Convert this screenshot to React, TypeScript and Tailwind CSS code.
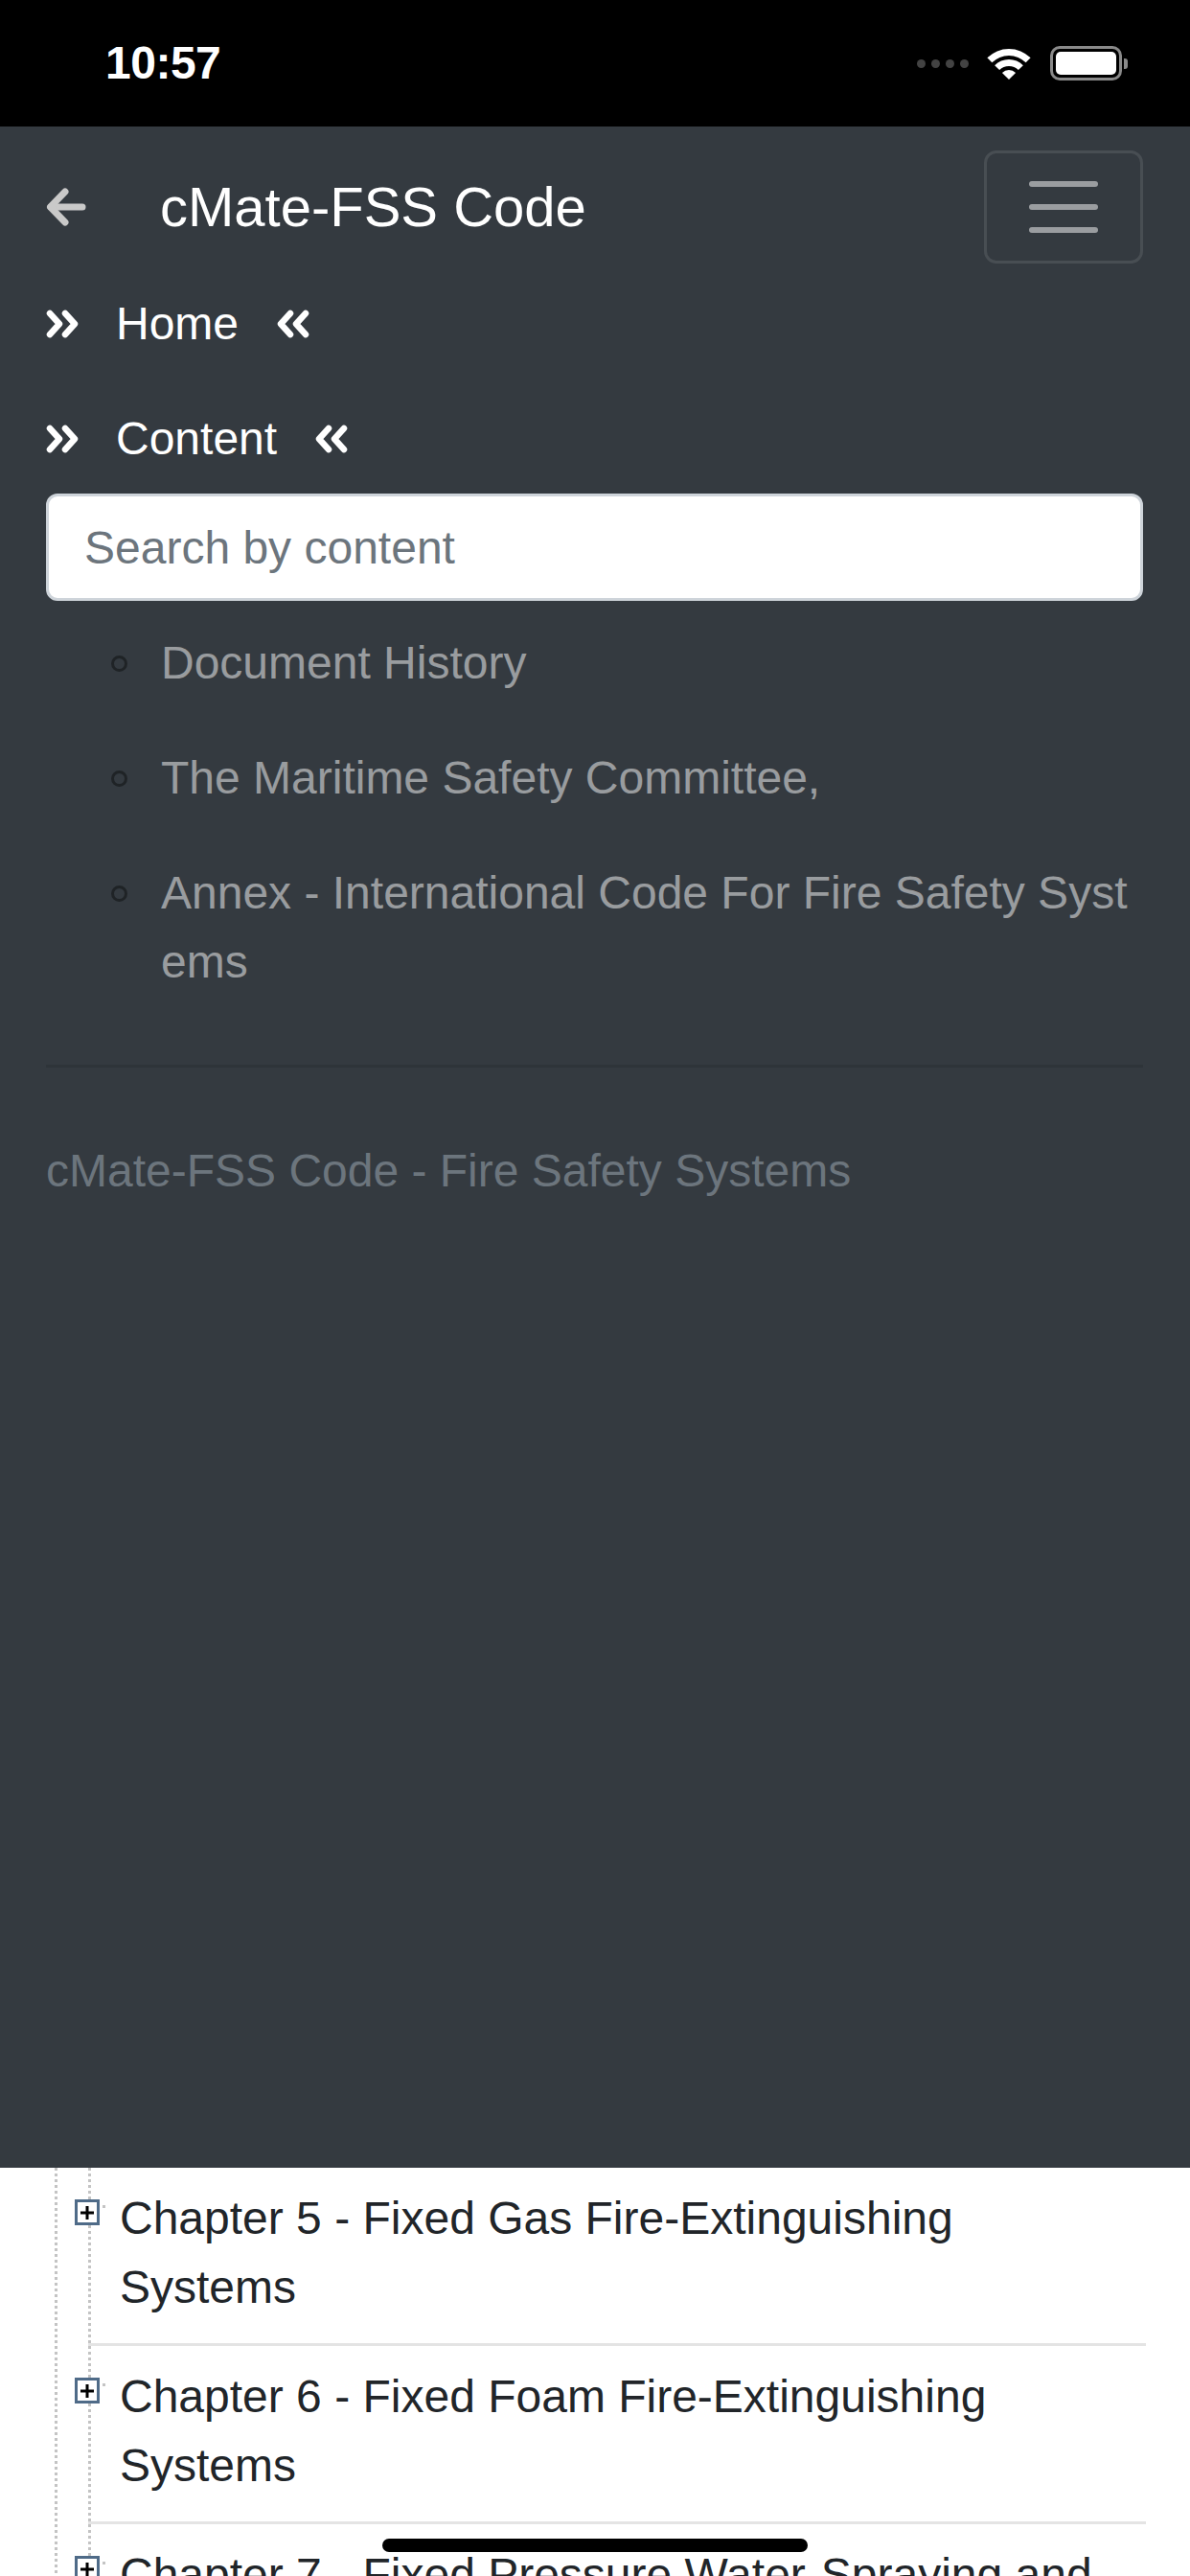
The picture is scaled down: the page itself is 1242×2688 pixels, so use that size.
const chapters = [
  "Chapter 5 - Fixed Gas Fire-Extinguishing Systems",
  "Chapter 6 - Fixed Foam Fire-Extinguishing Systems",
  "Chapter 7 - Fixed Pressure Water-Spraying and Water-Mist Fire-Extinguishing Systems",
];

const contents = [
  "Document History",
  "The Maritime Safety Committee,",
  "Annex - International Code For Fire Safety Systems",
];

function Chevrons({ dir }: { dir: "right" | "left" }) {
  const pts =
    dir === "right"
      ? ["4,4 14,15 4,26", "20,4 30,15 20,26"]
      : ["14,4 4,15 14,26", "30,4 20,15 30,26"];
  return (
    <svg width="34" height="30" viewBox="0 0 34 30" fill="none" stroke="currentColor" strokeWidth="6.5" strokeLinecap="round" strokeLinejoin="round">
      {pts.map((p) => (
        <polyline key={p} points={p} />
      ))}
    </svg>
  );
}

function StatusBar() {
  return (
    <div className="flex h-[132px] shrink-0 items-center justify-between bg-black pl-[110px] pr-[65px]">
      <span className="text-[48px] font-semibold leading-none tracking-[-0.5px] text-white">10:57</span>
      <div className="flex items-center">
        <div className="flex items-center gap-[6px]">
          {[0, 1, 2, 3].map((i) => (
            <span key={i} className="h-[9px] w-[9px] rounded-full bg-[#434343]" />
          ))}
        </div>
        <svg className="ml-[19px]" width="46" height="34" viewBox="0 0 46 34" fill="#fff">
          <path d="M0.37 11.37 A32 32 0 0 1 45.63 11.37 L40.68 16.32 A25 25 0 0 0 5.32 16.32 Z" />
          <path d="M8.15 19.15 A21 21 0 0 1 37.85 19.15 L32.9 24.1 A14 14 0 0 0 13.1 24.1 Z" />
          <path d="M23 34 L15.93 26.93 A10 10 0 0 1 30.07 26.93 Z" />
        </svg>
        <div className="ml-[20px] flex items-center">
          <div className="flex h-[36px] w-[75px] items-center rounded-[10px] border-[3px] border-[#8a8a8a] p-[3px]">
            <div className="h-full w-full rounded-[5px] bg-white" />
          </div>
          <div className="ml-[2px] h-[11px] w-[4px] rounded-r-[3px] bg-[#8a8a8a]" />
        </div>
      </div>
    </div>
  );
}

function NavRow({ label }: { label: string }) {
  return (
    <div className="flex h-[120px] items-center text-white">
      <Chevrons dir="right" />
      <span className="ml-[39px] text-[48px] leading-[72px]">{label}</span>
      <span className="ml-[40px]">
        <Chevrons dir="left" />
      </span>
    </div>
  );
}

export default function App() {
  return (
    <div className="relative flex h-[2688px] flex-col overflow-hidden bg-white font-['Liberation_Sans',Arial,sans-serif]">
      <StatusBar />

      <div className="h-[2130px] shrink-0 bg-[#343a40] pl-[48px] pr-[49px]">
        <div className="flex items-center justify-between pt-[25px]">
          <div className="flex items-center">
            <svg width="42" height="42" viewBox="0 0 42 42" fill="none" stroke="#c9c9c9" strokeWidth="7" strokeLinecap="round" strokeLinejoin="round">
              <path d="M38 21 H5" />
              <path d="M20 5 L4.5 21 L20 37" />
            </svg>
            <span className="ml-[77px] text-[58px] leading-none text-white">cMate-FSS Code</span>
          </div>
          <button className="flex h-[118px] w-[166px] flex-col items-center justify-center gap-[18px] rounded-[13px] border-[3px] border-[rgba(255,255,255,0.1)]">
            <span className="h-[6px] w-[72px] rounded-full bg-[rgba(255,255,255,0.5)]" />
            <span className="h-[6px] w-[72px] rounded-full bg-[rgba(255,255,255,0.5)]" />
            <span className="h-[6px] w-[72px] rounded-full bg-[rgba(255,255,255,0.5)]" />
          </button>
        </div>

        <div className="mt-[3px]">
          <NavRow label="Home" />
          <NavRow label="Content" />
        </div>

        <input
          placeholder="Search by content"
          className="mt-[-3px] block h-[112px] w-full rounded-[12px] border-[3px] border-[#ced4da] bg-white px-[37px] text-[48px] text-[#495057] outline-none placeholder:text-[#6c757d]"
        />

        <ul className="mt-[5px] pl-[68px]">
          {contents.map((c) => (
            <li key={c} className="flex py-[24px]">
              <div className="flex h-[72px] w-[17px] shrink-0 items-center">
                <span className="h-[17px] w-[17px] rounded-full border-[3px] border-[#1f2326]" />
              </div>
              <span className="ml-[35px] break-all text-[48px] leading-[72px] text-[rgba(255,255,255,0.5)]">{c}</span>
            </li>
          ))}
        </ul>

        <hr className="mt-[47px] border-t-[3px] border-[rgba(0,0,0,0.1)]" />

        <p className="mt-[72px] text-[48px] leading-[72px] text-[#6c757d]">cMate-FSS Code - Fire Safety Systems</p>
      </div>

      <div className="min-h-0 flex-1 overflow-hidden pl-[57px] pr-[46px]">
        <div className="h-full bg-[linear-gradient(to_bottom,#c4c4c4_50%,transparent_50%)] bg-[length:3px_6px] bg-left bg-repeat-y pl-[35px]">
          <ul className="h-full bg-[linear-gradient(to_bottom,#c4c4c4_50%,transparent_50%)] bg-[length:3px_6px] bg-left bg-repeat-y">
            {chapters.map((c) => (
              <li key={c} className="relative border-b-[3px] border-[#e4e4e4] pb-[22px] pl-[33px] pr-[26px] pt-[17px]">
                <span className="absolute left-[-14px] top-[33px] flex h-[27px] w-[26px] items-center justify-center border-[3px] border-[#4f6b88] bg-white">
                  <svg width="14" height="14" viewBox="0 0 14 14" stroke="#000" strokeWidth="3">
                    <path d="M0 7 H14 M7 0 V14" />
                  </svg>
                </span>
                <span className="absolute left-[15px] top-[39px] h-[3px] w-[3px] bg-[#c4c4c4]" />
                <p className="text-[48px] leading-[72px] text-[#212529]">{c}</p>
              </li>
            ))}
          </ul>
        </div>
      </div>

      <div className="absolute bottom-[25px] left-1/2 h-[14px] w-[444px] -translate-x-1/2 rounded-full bg-black" />
    </div>
  );
}
